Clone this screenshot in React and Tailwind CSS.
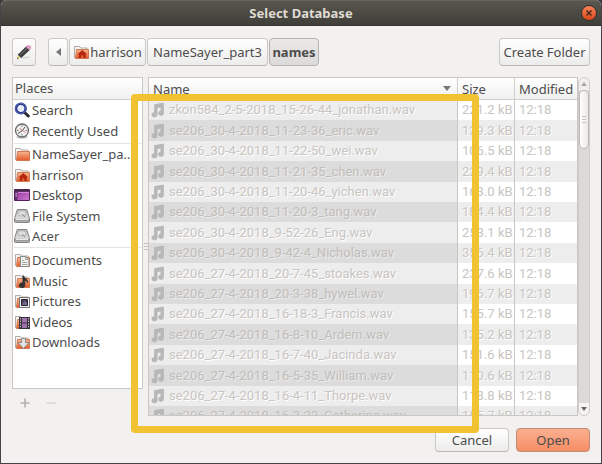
import React from "react";

const files = [
  ["zkon584_2-5-2018_15-26-44_jonathan.wav", "221.2 kB"],
  ["se206_30-4-2018_11-23-36_eric.wav", "139.3 kB"],
  ["se206_30-4-2018_11-22-50_wei.wav", "106.5 kB"],
  ["se206_30-4-2018_11-21-35_chen.wav", "229.4 kB"],
  ["se206_30-4-2018_11-20-46_yichen.wav", "163.0 kB"],
  ["se206_30-4-2018_11-20-3_tang.wav", "184.4 kB"],
  ["se206_30-4-2018_9-52-26_Eng.wav", "253.1 kB"],
  ["se206_30-4-2018_9-42-4_Nicholas.wav", "356.4 kB"],
  ["se206_27-4-2018_20-7-45_stoakes.wav", "237.6 kB"],
  ["se206_27-4-2018_20-3-38_hywel.wav", "196.7 kB"],
  ["se206_27-4-2018_16-18-3_Francis.wav", "155.7 kB"],
  ["se206_27-4-2018_16-8-10_Ardern.wav", "135.2 kB"],
  ["se206_27-4-2018_16-7-40_Jacinda.wav", "151.6 kB"],
  ["se206_27-4-2018_16-5-35_William.wav", "110.6 kB"],
  ["se206_27-4-2018_16-4-11_Thorpe.wav", "118.8 kB"],
  ["se206_27-4-2018_16-3-23_Catherine.wav", "155.7 kB"],
];

const places = [
  [["Search", "search"], ["Recently Used", "clock"]],
  [
    ["NameSayer_pa…", "folder"],
    ["harrison", "home"],
    ["Desktop", "desktop"],
    ["File System", "drive"],
    ["Acer", "drive"],
  ],
  [
    ["Documents", "documents"],
    ["Music", "music"],
    ["Pictures", "pictures"],
    ["Videos", "videos"],
    ["Downloads", "downloads"],
  ],
];

const notePath =
  "M4.5 2.6 13.5 1v10.3a2.5 2.2 0 1 1-2.6-2.2V5L7.1 5.7v6.9a2.6 2.3 0 1 1-2.6-2.2z";

function FolderBase({ children }) {
  return (
    <>
      <path d="M1.5 14V2.5h5l1 1.5h6.5v4" fill="#f6f4f2" stroke="#b5aaa4" />
      <path d="M3.5 5.5h12v9h-13z" fill="url(#folderFill)" stroke="#d07a54" />
      {children}
    </>
  );
}

function PlaceIcon({ kind }) {
  return (
    <svg viewBox="0 0 16 16" className="size-4 shrink-0" aria-hidden="true">
      <defs>
        <linearGradient id="folderFill" x1="0" y1="0" x2="0" y2="1">
          <stop offset="0" stopColor="#f9b58e" />
          <stop offset="1" stopColor="#e4592a" />
        </linearGradient>
        <linearGradient id="driveFill" x1="0" y1="0" x2="0" y2="1">
          <stop offset="0" stopColor="#b9b9b9" />
          <stop offset="1" stopColor="#ececec" />
        </linearGradient>
        <linearGradient id="deskFill" x1="0" y1="0" x2="1" y2="1">
          <stop offset="0" stopColor="#8d2a94" />
          <stop offset="1" stopColor="#cf7bd2" />
        </linearGradient>
      </defs>
      {kind === "search" && (
        <>
          <path d="m10 10 4.3 4" stroke="#29292e" strokeWidth="3" strokeLinecap="round" />
          <circle cx="6.8" cy="6.5" r="4.8" fill="#e9edf7" stroke="#2b3b8f" strokeWidth="2.6" />
          <circle cx="6.8" cy="6.5" r="5.2" fill="none" stroke="#7587cb" strokeWidth=".6" />
          <path d="M4.5 6a2.5 2.5 0 0 1 2.5-2" fill="none" stroke="#fff" />
        </>
      )}
      {kind === "clock" && (
        <>
          <ellipse cx="8" cy="14" rx="5.5" ry="1.5" fill="#bbb" />
          <circle cx="8" cy="7.5" r="6.5" fill="#eee" stroke="#686868" strokeWidth="1.3" />
          <path d="M8 2.5v1.4M8 11v1.5M3 7.5h1.5M11.5 7.5H13" stroke="#777" />
          <path d="M4 10.5 8 8l3-4" fill="none" stroke="#555" />
          <path d="m5.5 5.5 6 4" stroke="#c66" strokeWidth=".8" />
        </>
      )}
      {kind === "folder" && <FolderBase />}
      {kind === "home" && (
        <FolderBase>
          <path d="m9.3 6-4.8 4.2h1.3V14h2.5v-2.5h2V14h2.5v-3.8H14z" fill="#b5270f" />
        </FolderBase>
      )}
      {kind === "desktop" && (
        <>
          <path d="M.5 2.5h15v11H.5z" fill="url(#deskFill)" stroke="#55205c" />
          <path d="M1 3h14v1.8H1z" fill="#42294a" />
          <path d="M1 5h2.4v8H1z" fill="#61316b" />
          <path d="M1.5 6h1.3v1.3H1.5zM1.5 8.3h1.3v1.3H1.5z" fill="#e5c3e6" />
          <path d="M4 5.5h11" stroke="#dc9fe0" strokeWidth=".7" />
        </>
      )}
      {kind === "drive" && (
        <>
          <path d="M3.3 1.5h9.4l2.8 9v3.2a.8.8 0 0 1-.8.8H1.3a.8.8 0 0 1-.8-.8v-3.2z" fill="url(#driveFill)" stroke="#858585" />
          <ellipse cx="8" cy="5.4" rx="4" ry="2.7" fill="#dedede" stroke="#aaa" strokeWidth=".7" />
          <path d="M1 10.7h14v3H1z" fill="#9c9c9c" />
          <path d="M2 11.4h12" stroke="#f3f3f3" />
          <path d="m8 6 3 3" stroke="#888" />
        </>
      )}
      {kind === "documents" && (
        <FolderBase>
          <path d="M6.5 4.5h5l3.5 3v7H6.5z" fill="#f3f3f2" stroke="#888" />
          <path d="M11.5 4.5v3H15M8 8.5h2.5M8 10.5h5.5M8 12.5h5.5" fill="none" stroke="#a5a5a5" />
        </FolderBase>
      )}
      {kind === "music" && (
        <FolderBase>
          <path d="M9 2.5c.5 2 4.5 2.5 4.5 7-1-2-2-2.4-2.7-2.5v5.3a2.7 2.3 0 1 1-1.8-2.2z" fill="#333" stroke="#333" />
        </FolderBase>
      )}
      {kind === "pictures" && (
        <FolderBase>
          <path d="M5.5 4.5h10v10h-10z" fill="#f0f0f0" stroke="#747474" />
          <path d="M7.5 6.5h6v6h-6z" fill="#473d5c" stroke="#28252e" />
          <path d="m8 11 3-3 2 2v2H8z" fill="#77698e" />
        </FolderBase>
      )}
      {kind === "videos" && (
        <FolderBase>
          <path d="M5 3h11v12H5z" fill="#37313b" />
          <path d="M8 4h5v4.5H8zM8 9.5h5V14H8z" fill="#a172ae" />
          <path d="M6.4 4v10M14.6 4v10" stroke="#d1cbd4" strokeDasharray="1.4 1.2" />
        </FolderBase>
      )}
      {kind === "downloads" && (
        <FolderBase>
          <path d="M7.5 4.5h4v4H15l-5.5 6L4 8.5h3.5z" fill="#e2e2e2" stroke="#8a8a8a" />
        </FolderBase>
      )}
    </svg>
  );
}

function Grip({ className }) {
  return (
    <svg viewBox="0 0 4 7" className={className} aria-hidden="true">
      <path d="M0 .5h4M0 3.5h4M0 6.5h4" stroke="#c4c1be" />
    </svg>
  );
}

const button =
  "flex items-center justify-center rounded border border-[#cbc8c5] border-b-[#b9b6b3] bg-linear-to-b from-white to-[#ececeb] whitespace-nowrap";
const headCell =
  "h-[22px] border-b border-[#d0cdca] bg-linear-to-b from-white to-[#f0f0ef] p-0 text-left font-normal";

export default function App() {
  return (
    <div className="h-screen bg-[#3c3a40] font-['Noto_Sans','Open_Sans',sans-serif] text-[13px] leading-5 text-[#4c4c4c]">
      <div className="relative flex h-full flex-col overflow-hidden rounded-t-md border-x border-b border-[#454347] bg-[#f2f1f0]">
        <header className="flex h-[26px] shrink-0 items-center border-t border-b border-t-[#65635a] border-b-[#33322e] bg-linear-to-b from-[#59574e] to-[#3f3e39] px-1">
          <span className="w-4" />
          <h1 className="flex-1 text-center font-bold text-[#dfdbd2]">Select Database</h1>
          <button aria-label="Close" className="flex size-4 items-center justify-center rounded-full border border-[#34332e] bg-linear-to-b from-[#f58157] to-[#dd4814]">
            <svg viewBox="0 0 8 8" className="size-2" aria-hidden="true">
              <path d="m1.5 1.5 5 5m0-5-5 5" stroke="#4a2a1c" strokeWidth="1.5" />
            </svg>
          </button>
        </header>

        <main className="flex min-h-0 flex-1 flex-col px-[11px] pt-3 pb-[11px]">
          <nav className="flex h-7 shrink-0 items-stretch">
            <button aria-label="Type a file name" className={`${button} w-6`}>
              <svg viewBox="0 0 16 16" className="size-4" aria-hidden="true">
                <path d="M4 14.5q5-3 11-1.5-4 2-11 1.5z" fill="#d4d3d1" />
                <path d="m1 15 1.2-4.3L5 13.5z" fill="#e8d67a" />
                <path d="M1.7 10.8 10.6 2l3.7 3.6L5.2 14z" fill="#3b3d3c" />
                <path d="m4 11 7.5-7" stroke="#7c7f7d" />
                <path d="m10 2.9 1.5-1.6c1.6-1.3 4.8 1.4 3.4 3.2L13.4 6.2z" fill="#df9cc8" />
                <path d="m1 15 .4-1.6 1.1 1z" fill="#222" />
              </svg>
            </button>
            <div className="ml-3 flex gap-px">
              <button aria-label="Scroll path left" className={`${button} w-5`}>
                <svg viewBox="0 0 5 8" className="h-2 w-[5px]" aria-hidden="true">
                  <path d="M5 0v8L0 4z" fill="#777" />
                </svg>
              </button>
              <button className={`${button} w-[77px] gap-px`}>
                <PlaceIcon kind="home" />
                harrison
              </button>
              <button className={`${button} w-[121px]`}>NameSayer_part3</button>
              <button aria-current="page" className="flex w-[50px] items-center justify-center rounded border border-[#b5b2af] bg-linear-to-b from-[#ebe9e8] to-[#dddbd9] font-bold">
                names
              </button>
            </div>
            <button className={`${button} ml-auto w-[91px]`}>Create Folder</button>
          </nav>

          <div className="mt-[11px] flex min-h-0 flex-1">
            <aside className="flex w-[131px] shrink-0 flex-col">
              <div className="min-h-0 flex-1 overflow-hidden border border-[#c9c6c3] bg-white">
                <h2 className={`${headCell} pl-0.5`}>Places</h2>
                {places.map((group, i) => (
                  <ul key={i} className="mx-px border-b border-[#e6e4e2] pb-px first-of-type:pb-0.5 last:border-0 last:pt-0.5">
                    {group.map(([label, kind]) => (
                      <li key={label} className="h-5 even:h-[21px]">
                        <button className="flex h-full w-full items-center gap-0.5 overflow-hidden whitespace-nowrap">
                          <PlaceIcon kind={kind} />
                          {label}
                        </button>
                      </li>
                    ))}
                  </ul>
                ))}
              </div>
              <div className="flex h-[27px] shrink-0 items-center gap-4 pl-2">
                <button aria-label="Add bookmark" className="flex size-2.5 items-center">
                  <svg viewBox="0 0 10 10" className="size-2.5" aria-hidden="true">
                    <path d="M5 .5v9M.5 5h9" stroke="#b3b1af" strokeWidth="1.6" />
                  </svg>
                </button>
                <button aria-label="Remove bookmark" disabled className="flex size-2.5 items-center">
                  <svg viewBox="0 0 10 10" className="size-2.5" aria-hidden="true">
                    <path d="M.5 5h9" stroke="#d9d7d5" strokeWidth="1.6" />
                  </svg>
                </button>
              </div>
            </aside>

            <div className="flex w-[5px] shrink-0 items-center justify-center">
              <Grip className="h-[7px] w-1" />
            </div>

            <section className="min-w-0 flex-1 overflow-hidden border border-[#c9c6c3] bg-white">
              <table className="w-full table-fixed border-separate border-spacing-0">
                <colgroup>
                  <col />
                  <col className="w-[57px]" />
                  <col className="w-[62px]" />
                </colgroup>
                <thead>
                  <tr>
                    <th className={`${headCell} border-r`}>
                      <div className="flex items-center justify-between pr-1.5 pl-1">
                        Name
                        <svg viewBox="0 0 8 5" className="h-[5px] w-2" aria-hidden="true">
                          <path d="M0 0h8L4 5z" fill="#777" />
                        </svg>
                      </div>
                    </th>
                    <th className={`${headCell} border-r`}>
                      <div className="pl-1">Size</div>
                    </th>
                    <th className={headCell}>
                      <div className="pl-1">Modified</div>
                    </th>
                  </tr>
                </thead>
                <tbody className="font-[Roboto,sans-serif] text-[#c9c5c1] [text-shadow:1px_1px_0_#fff]">
                  {files.map(([name, size]) => (
                    <tr key={name} className="group h-5 whitespace-nowrap nth-[5n+2]:h-[21px] nth-[5n+4]:h-[21px]">
                      <td className="border-r border-[#c9c6c3] bg-[#ededed] p-0 group-even:bg-[#dcdcdc] group-even:text-[#c1bdb9] group-even:[text-shadow:1px_1px_0_#ececec]">
                        <div className="flex items-center gap-[3px] overflow-hidden pl-px">
                          <svg viewBox="0 0 16 16" className="size-4 shrink-0" aria-hidden="true">
                            <path d={notePath} fill="#b8b8b8" stroke="#b0b0b0" strokeWidth=".6" />
                          </svg>
                          {name}
                        </div>
                      </td>
                      <td className="border-r border-[#c9c6c3] p-0 pl-1 group-even:bg-[#ededed]">{size}</td>
                      <td className="p-0 pl-1 group-even:bg-[#ededed]">12:18</td>
                    </tr>
                  ))}
                </tbody>
              </table>
            </section>

            <div className="flex w-3 shrink-0 flex-col rounded-full border border-[#cfccc9] bg-[#dcdad8]">
              <button aria-label="Scroll up" className="flex h-3 shrink-0 items-center justify-center rounded-t-full bg-[#f0efee]">
                <svg viewBox="0 0 6 4" className="h-1 w-1.5" aria-hidden="true">
                  <path d="M0 4h6L3 0z" fill="#aaa" />
                </svg>
              </button>
              <div className="flex h-[59px] shrink-0 items-center justify-center rounded-full border border-[#bcb9b6] bg-linear-to-r from-white to-[#e9e8e7]">
                <Grip className="h-[7px] w-1" />
              </div>
              <button aria-label="Scroll down" className="mt-auto flex h-3 shrink-0 items-center justify-center rounded-b-full bg-[#f5f4f3]">
                <svg viewBox="0 0 6 4" className="h-1 w-1.5" aria-hidden="true">
                  <path d="M0 0h6L3 4z" fill="#666" />
                </svg>
              </button>
            </div>
          </div>

          <footer className="mt-3 flex h-6 shrink-0 justify-end gap-[7px]">
            <button className={`${button} w-[74px]`}>Cancel</button>
            <button className="flex w-[74px] items-center justify-center rounded border border-[#c28a73] bg-linear-to-b from-[#fbb091] to-[#f58d64]">
              Open
            </button>
          </footer>
        </main>

        <div className="pointer-events-none absolute top-[94px] right-[122px] bottom-[30px] left-[130px] rounded border-7 border-[#f1c232]" />
      </div>
    </div>
  );
}
